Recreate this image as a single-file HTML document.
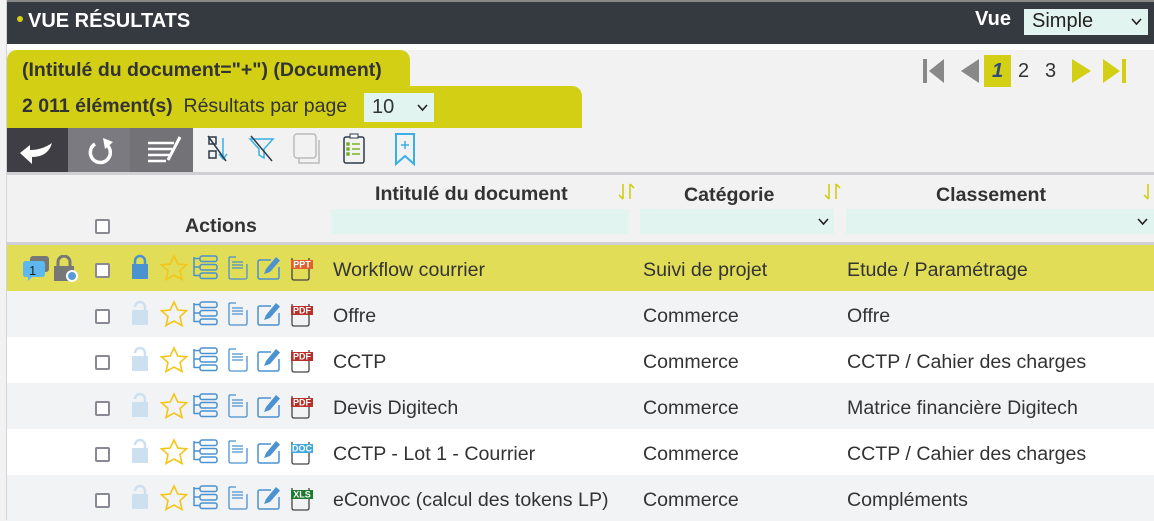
<!DOCTYPE html>
<html><head><meta charset="utf-8"><style>
*{box-sizing:border-box;margin:0;padding:0}
body{width:1154px;height:520px;overflow:hidden;background:#f2f2f2;font-family:"Liberation Sans",Arial,sans-serif;position:relative;color:#333}
.abs{position:absolute}
.hdr{left:7px;top:0;width:1147px;height:44px;background:#343a40;border-top:2px solid #888}
.t{font-weight:bold;color:#fff;font-size:20px}
.cb{width:15px;height:15px;border:2px solid #8a8894;border-radius:2px;background:#fff}
.row{left:7px;width:1147px;height:46px}
.txt{font-size:19.6px;color:#333}
.sel{background:#e2f4ef}
</style></head><body>
<div class="abs" style="left:0;top:0;width:7px;height:520px;background:#f2f2f2;border-right:1px solid #d4d4d4"></div>
<div class="abs hdr"></div>
<div class="abs" style="left:17px;top:16px;width:6px;height:6px;border-radius:3px;background:#d4cf14"></div>
<div class="abs t" style="left:28px;top:10px">VUE RÉSULTATS</div>
<div class="abs t" style="left:975px;top:8px">Vue</div>
<div class="abs sel" style="left:1024px;top:9px;width:124px;height:26px;font-size:20px;padding:1px 8px;color:#222">Simple<svg style="position:absolute;right:6px;top:9px" width="11" height="8"><path d="M1 1 L5.5 6 L10 1" stroke="#222" stroke-width="1.6" fill="none"/></svg></div>
<div class="abs" style="left:7px;top:44px;width:1147px;height:6px;background:#fff"></div>
<div class="abs" style="left:7px;top:50px;width:403px;height:40px;background:#d2cf14;border-radius:10px 10px 0 0"></div>
<div class="abs" style="left:7px;top:86px;width:575px;height:42px;background:#d2cf14;border-radius:0 10px 0 0"></div>
<div class="abs" style="left:22px;top:59px;font-size:19.5px;font-weight:bold;color:#333">(Intitulé du document="+") (Document)</div>
<div class="abs" style="left:22px;top:95px;font-size:19.5px;color:#333"><b>2 011 élément(s)</b>&nbsp; Résultats par page</div>
<div class="abs sel" style="left:364px;top:93px;width:70px;height:29px;font-size:20px;padding:3px 8px">10<svg style="position:absolute;right:6px;top:11px" width="11" height="8"><path d="M1 1 L5.5 6 L10 1" stroke="#222" stroke-width="1.6" fill="none"/></svg></div>
<!-- pager -->
<svg class="abs" style="left:920px;top:55px" width="220" height="34">
<rect x="3" y="4" width="4" height="24" fill="#888"/><polygon points="24,4 24,28 9,16" fill="#888"/>
<polygon points="59,4 59,28 41,16" fill="#888"/>
<rect x="64" y="0" width="27" height="32" fill="#d2cf14"/>
<polygon points="152,4 152,28 171,16" fill="#d2cf14"/>
<polygon points="183,4 183,28 200,16" fill="#d2cf14"/><rect x="202" y="4" width="4" height="24" fill="#d2cf14"/>
</svg>
<div class="abs" style="left:992px;top:60px;font-size:20px;font-weight:bold;font-style:italic;color:#2d4a7a">1</div>
<div class="abs" style="left:1018px;top:60px;font-size:20px">2</div>
<div class="abs" style="left:1045px;top:60px;font-size:20px">3</div>
<!-- toolbar -->
<div class="abs" style="left:7px;top:128px;width:61px;height:45px;background:#3f3e44"></div>
<div class="abs" style="left:68px;top:128px;width:62px;height:45px;background:#7b7a80"></div>
<div class="abs" style="left:130px;top:128px;width:63px;height:45px;background:#737276"></div>
<svg class="abs" style="left:0;top:128px" width="480" height="45">
<path d="M20 25 L30 17 L30 22 Q42 22 52 15 Q48 29 32 29 L32 36 Z" fill="#fff"/>
<path d="M95 16 A10 10 0 1 0 107 17" stroke="#fff" stroke-width="3.5" fill="none"/><polygon points="103,10 113,14 105,21" fill="#fff"/>
<g stroke="#fff" stroke-width="2.5"><line x1="148" y1="15" x2="174" y2="15"/><line x1="148" y1="21" x2="172" y2="21"/><line x1="148" y1="27" x2="170" y2="27"/><line x1="148" y1="33" x2="166" y2="33"/></g><line x1="180" y1="9" x2="168" y2="32" stroke="#fff" stroke-width="3"/>
<rect x="209" y="9" width="7" height="7" fill="none" stroke="#2d3a4a" stroke-width="1.5"/><rect x="209" y="23" width="7" height="7" fill="none" stroke="#2d3a4a" stroke-width="1.5"/><path d="M223 10 V30 M219 26 L223 31 L227 26" stroke="#3ab0e8" stroke-width="1.5" fill="none"/><line x1="208" y1="8" x2="226" y2="33" stroke="#2d3a4a" stroke-width="1.5"/>
<path d="M250 11 H273 L264 21 V30 L259 27 V21 Z" fill="none" stroke="#3ab0e8" stroke-width="1.5"/><line x1="251" y1="8" x2="272" y2="33" stroke="#2d3a4a" stroke-width="1.5"/>
<rect x="294" y="6" width="22" height="24" rx="3" fill="none" stroke="#bbb" stroke-width="1.5"/><path d="M299 30 V35 H319 V12" fill="none" stroke="#bbb" stroke-width="1.5"/>
<rect x="344" y="9" width="20" height="26" rx="2" fill="none" stroke="#2d3a4a" stroke-width="1.5"/><rect x="350" y="6" width="8" height="4" fill="#fff" stroke="#2d3a4a"/><g stroke="#7ab32e" stroke-width="1.5"><line x1="352" y1="16" x2="360" y2="16"/><line x1="352" y1="21" x2="360" y2="21"/><line x1="352" y1="26" x2="360" y2="26"/><rect x="347" y="15" width="2" height="2"/><rect x="347" y="20" width="2" height="2"/><rect x="347" y="25" width="2" height="2"/></g>
<path d="M396 6 H414 V36 L405 28 L396 36 Z" fill="none" stroke="#3ab0e8" stroke-width="2"/><path d="M405 13 V21 M401 17 H409" stroke="#3ab0e8" stroke-width="1.5"/>
</svg>
<div class="abs" style="left:7px;top:172px;width:1147px;height:3px;background:#d0d0d4"></div>
<div class="abs" style="left:375px;top:183px;font-size:19.6px;font-weight:bold">Intitulé du document</div>
<div class="abs" style="left:684px;top:184px;font-size:19.6px;font-weight:bold">Catégorie</div>
<div class="abs" style="left:936px;top:184px;font-size:19.6px;font-weight:bold">Classement</div>
<svg class="abs" style="left:0;top:183px" width="1154" height="20">
<g stroke="#d2cf14" stroke-width="1.6" fill="none">
<path d="M623 1 V16 M619 12 L623 16 M630 16 V1 M630 1 L634 5"/>
<path d="M829 1 V16 M825 12 L829 16 M836 16 V1 M836 1 L840 5"/>
<path d="M1148 1 V16 M1144 12 L1148 16"/>
</g></svg>
<div class="abs sel" style="left:331px;top:209px;width:298px;height:25px"></div>
<div class="abs sel" style="left:640px;top:209px;width:194px;height:25px"><svg style="position:absolute;right:5px;top:9px" width="11" height="8"><path d="M1 1 L5.5 6 L10 1" stroke="#222" stroke-width="1.6" fill="none"/></svg></div>
<div class="abs sel" style="left:846px;top:209px;width:308px;height:25px"><svg style="position:absolute;right:6px;top:9px" width="11" height="8"><path d="M1 1 L5.5 6 L10 1" stroke="#222" stroke-width="1.6" fill="none"/></svg></div>
<div class="abs cb" style="left:95px;top:219px"></div>
<div class="abs" style="left:185px;top:215px;font-size:19.6px;font-weight:bold">Actions</div>
<div class="abs" style="left:7px;top:242px;width:1147px;height:3px;background:#d0d0d4"></div>

<div class="abs row" style="top:245px;background:#e1dd57"></div>
<div class="abs row" style="top:291px;background:#f2f3f5"></div>
<div class="abs row" style="top:337px;background:#fff"></div>
<div class="abs row" style="top:383px;background:#f2f3f5"></div>
<div class="abs row" style="top:429px;background:#fff"></div>
<div class="abs row" style="top:475px;background:#f2f3f5"></div>

<svg class="abs" style="left:22px;top:255px" width="60" height="30">
<rect x="8" y="1" width="19" height="16" rx="3" fill="#777"/><path d="M4 6 H20 Q23 6 23 9 V19 Q23 22 20 22 H10 L6 26 V22 H4 Q1 22 1 19 V9 Q1 6 4 6 Z" fill="#5cb8ef"/>
<text x="7" y="20" font-size="13" font-family="Liberation Sans" fill="#222">1</text>
<path d="M36 11 V7 A6 6 0 0 1 48 7 V11" stroke="#777" stroke-width="3" fill="none"/><rect x="32" y="11" width="20" height="15" fill="#777"/><circle cx="50" cy="21" r="6" fill="#fff"/><circle cx="50" cy="21" r="4" fill="#5a9bd5"/>
</svg>

<div id="rows"></div>
<script>
const data=[
["Workflow courrier","Suivi de projet","Etude / Paramétrage","PPT","#e06030",1],
["Offre","Commerce","Offre","PDF","#b8302a",0],
["CCTP","Commerce","CCTP / Cahier des charges","PDF","#b8302a",0],
["Devis Digitech","Commerce","Matrice financière Digitech","PDF","#b8302a",0],
["CCTP - Lot 1 - Courrier","Commerce","CCTP / Cahier des charges","DOC","#42a8e0",0],
["eConvoc (calcul des tokens LP)","Commerce","Compléments","XLS","#1e7a2e",0]];
let h="";
data.forEach((d,i)=>{const y=245+i*46;
const lockc=d[5]?"#4a92d0":"#cde0ef";
const lock=d[5]?'<path d="M4 10 V7 A5 5 0 0 1 14 7 V10" stroke="'+lockc+'" stroke-width="2.5" fill="none"/>':'<path d="M4 7 A5 5 0 0 1 14 7 V10" stroke="'+lockc+'" stroke-width="2.5" fill="none"/>';
h+=`<div class="abs cb" style="left:95px;top:${y+18}px"></div>
<svg class="abs" style="left:131px;top:${y+9}px" width="190" height="30">
<g>${lock}<rect x="1" y="10" width="16" height="15" fill="${lockc}"/></g>
<polygon points="43,2 46.8,10 55.5,10.8 49,16.5 51,25.5 43,21 35,25.5 37,16.5 30.5,10.8 39.2,10" fill="none" stroke="#f5c518" stroke-width="1.6"/>
<g fill="none" stroke="#4a92d0" stroke-width="1.5"><rect x="69" y="2" width="17" height="5.5" rx="2"/><rect x="69" y="10.5" width="17" height="5.5" rx="2"/><rect x="69" y="19" width="17" height="5.5" rx="2"/><path d="M63 3 V22 M63 13 H69 M63 21.5 H69 M63 4.5 H69"/></g>
<g fill="none" stroke="#4a92d0" stroke-width="1.3"><path d="M98 3 V23 Q98 25 100 25 H114 Q116 25 116 23 V10 M98 3 H105"/><path d="M101 8 H112 M101 11 H112 M101 14 H112"/></g>
<g fill="none" stroke="#4a92d0" stroke-width="1.5"><path d="M140 6 H129 Q127 6 127 8 V23 Q127 25 129 25 H146 Q148 25 148 23 V13"/></g><path d="M133 20 L135 15 L145 3 L149 6.5 L139 18 Z" fill="#4a92d0"/>
<path d="M161 4 V24 Q161 26 163 26 H176 Q178 26 178 24 V4" fill="none" stroke="#444" stroke-width="1.3"/>
<rect x="160" y="6" width="22" height="9" fill="${d[4]}"/><text x="171" y="13.5" text-anchor="middle" font-size="9" font-family="Liberation Sans" font-weight="bold" fill="#fff">${d[3]}</text>
</svg>
<div class="abs txt" style="left:333px;top:${y+14}px">${d[0]}</div>
<div class="abs txt" style="left:643px;top:${y+14}px">${d[1]}</div>
<div class="abs txt" style="left:847px;top:${y+14}px">${d[2]}</div>`;});
document.getElementById("rows").innerHTML=h;
</script>
</body></html>
